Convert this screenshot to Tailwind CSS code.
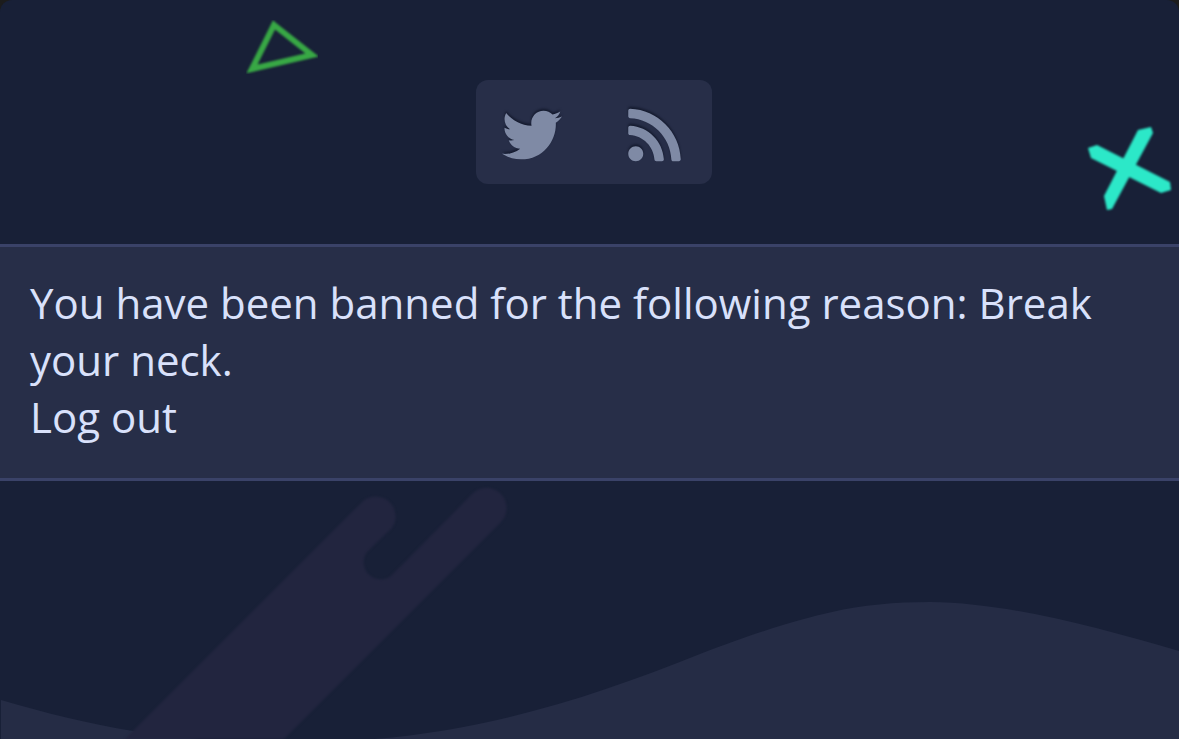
<!DOCTYPE html>
<html lang="en">
<head>
  <meta charset="UTF-8" />
  <meta name="viewport" content="width=device-width, initial-scale=1.0" />
  <title>Banned</title>
  <script src="https://cdn.jsdelivr.net/npm/@tailwindcss/browser@4"></script>
</head>
<body class="bg-[#1c1c1c] min-h-screen flex font-['Open_Sans',sans-serif] text-[#d9e1fb]">
  <div class="relative isolate grow overflow-hidden rounded-t-xl bg-[#182037]">

    <!-- background shapes -->
    <svg class="absolute inset-0 -z-10 w-full h-full" viewBox="0 0 1179 739" preserveAspectRatio="xMidYMid slice" aria-hidden="true">
      <defs>
        <filter id="soft" color-interpolation-filters="sRGB"><feGaussianBlur stdDeviation="0.8" /></filter>
      </defs>
      <path fill="#252c45" d="M1 739V700C45 713 90 724 133 731Q180 738 225 741H345C480 734 590 698 700 654C760 631 800 619 832 612C862 605 895 602 930 602C1010 603 1095 627 1179 651V739Z" />
      <path fill="#22253f" filter="url(#soft)" d="M125 739L363 501A20 20 0 0 1 392 528L368 551A17 17 0 0 0 392 575L472 494A20 20 0 0 1 501 522L284 739Z" />
      <path fill="none" stroke="#38a845" stroke-width="6" filter="url(#soft)" d="M274 25L312 55L252 69Z" />
      <g fill="#2ce8c8" filter="url(#soft)">
        <path d="M1088 148L1097 145L1170 182L1171 190L1161 193L1091 158Z" />
        <path d="M1138 130L1151 127L1153 133L1112 209L1107 210L1104 196Z" />
      </g>
    </svg>

    <header class="flex justify-center pt-20 pb-[60px] pl-[9px]">
      <nav class="flex items-center gap-[66px] h-[104px] pt-[6px] pl-[26px] pr-[31px] rounded-xl bg-[#272e48] text-[#7f8aa5]">
        <a href="#" aria-label="Twitter">
          <svg class="w-[60px] h-[60px] drop-shadow-[0_-2px_1px_#141a2e]" viewBox="0 0 512 512" fill="currentColor">
            <path d="M459.37 151.716c.325 4.548.325 9.097.325 13.645 0 138.72-105.583 298.558-298.558 298.558-59.452 0-114.68-17.219-161.137-47.106 8.447.974 16.568 1.299 25.34 1.299 49.055 0 94.213-16.568 130.274-44.832-46.132-.975-84.792-31.188-98.112-72.772 6.498.974 12.995 1.624 19.818 1.624 9.421 0 18.843-1.3 27.614-3.573-48.081-9.747-84.143-51.98-84.143-102.985v-1.299c13.969 7.797 30.214 12.67 47.431 13.319-28.264-18.843-46.781-51.005-46.781-87.391 0-19.492 5.197-37.36 14.294-52.954 51.655 63.675 129.3 105.258 216.365 109.807-1.624-7.797-2.599-15.918-2.599-24.04 0-57.828 46.782-104.934 104.934-104.934 30.213 0 57.502 12.67 76.67 33.137 23.715-4.548 46.456-13.32 66.599-25.34-7.798 24.366-24.366 44.833-46.132 57.827 21.117-2.273 41.584-8.122 60.426-16.243-14.292 20.791-32.161 39.308-52.628 54.253z" />
          </svg>
        </a>
        <a href="#" aria-label="RSS">
          <svg class="w-[53px] h-[60px] drop-shadow-[0_-2px_1px_#141a2e]" viewBox="0 0 448 512" fill="currentColor">
            <path d="M128.081 415.959c0 35.369-28.672 64.041-64.041 64.041S0 451.328 0 415.959s28.672-64.041 64.041-64.041 64.04 28.673 64.04 64.041zm175.66 47.25c-8.354-154.6-132.185-278.587-286.95-286.95C7.656 175.765 0 183.105 0 192.253v48.069c0 8.415 6.49 15.472 14.887 16.018 111.832 7.284 201.473 96.702 208.772 208.772.547 8.397 7.604 14.887 16.018 14.887h48.069c9.149.001 16.489-7.655 15.995-16.79zm144.249.288C439.596 229.677 251.465 40.445 16.503 32.01 7.473 31.686 0 38.981 0 48.016v48.068c0 8.625 6.835 15.645 15.453 15.999 191.179 7.839 344.627 161.316 352.465 352.465.353 8.618 7.373 15.453 15.999 15.453h48.068c9.034-.001 16.329-7.474 16.005-16.504z" />
          </svg>
        </a>
      </nav>
    </header>

    <main class="border-y-3 border-[#3a4268] bg-[#272e48] px-[30px] pt-[27px] pb-[33px] text-[42px] leading-[57px]">
      <p>You have been banned for the following reason: Break your neck.</p>
      <a href="#" class="block w-fit hover:underline">Log out</a>
    </main>
  </div>
</body>
</html>
